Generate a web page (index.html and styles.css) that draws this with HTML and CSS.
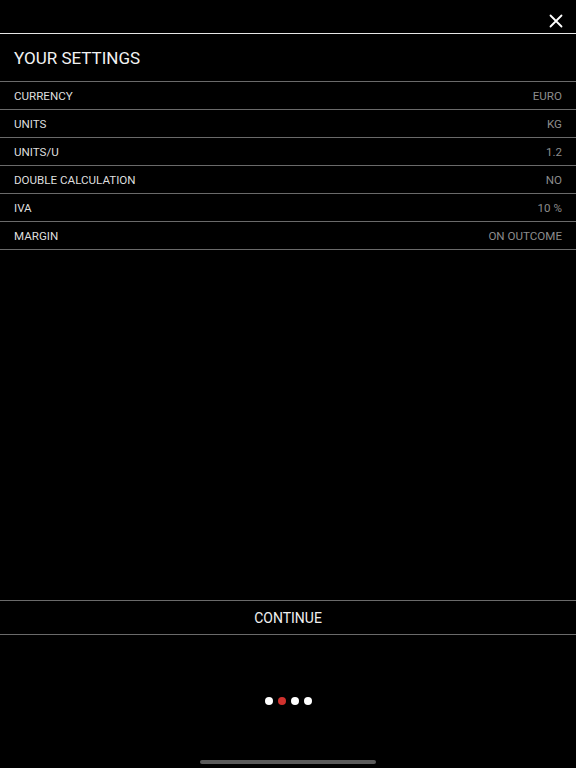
FILE: index.html
```html
<!DOCTYPE html>
<html>
<head>
<meta charset="utf-8">
<link rel="stylesheet" href="styles.css">
</head>
<body>
<div class="screen">
  <div class="topbar">
    <svg class="close" width="14" height="14" viewBox="0 0 14 14"><path d="M1.5 1.5 L12.5 12.5 M12.5 1.5 L1.5 12.5" stroke="#fff" stroke-width="1.8" stroke-linecap="round"/></svg>
  </div>
  <div class="title">YOUR SETTINGS</div>
  <div class="row"><span class="label">CURRENCY</span><span class="value">EURO</span></div>
  <div class="row"><span class="label">UNITS</span><span class="value">KG</span></div>
  <div class="row"><span class="label">UNITS/U</span><span class="value">1.2</span></div>
  <div class="row"><span class="label">DOUBLE CALCULATION</span><span class="value">NO</span></div>
  <div class="row"><span class="label">IVA</span><span class="value">10 %</span></div>
  <div class="row"><span class="label">MARGIN</span><span class="value">ON OUTCOME</span></div>
  <div class="spacer"></div>
  <div class="continue">CONTINUE</div>
  <div class="dots">
    <span class="dot"></span><span class="dot active"></span><span class="dot"></span><span class="dot"></span>
  </div>
  <div class="home"></div>
</div>
</body>
</html>
```
FILE: styles.css
```css
html, body {
  margin: 0;
  padding: 0;
  background: #000;
}
.screen {
  width: 576px;
  height: 768px;
  display: flex;
  flex-direction: column;
  font-family: Roboto, "Liberation Sans", sans-serif;
  color: #e2e2e2;
  overflow: hidden;
}
.topbar {
  height: 33px;
  border-bottom: 1px solid #e6e6e6;
  display: flex;
  justify-content: flex-end;
  align-items: center;
  padding-right: 13px;
  box-sizing: content-box;
}
.close {
  margin-top: 9px;
}
.title {
  height: 47px;
  border-bottom: 1px solid #6a6a6a;
  display: flex;
  align-items: center;
  padding-left: 14px;
  font-size: 17px;
  color: #f2f2f2;
}
.row {
  border-bottom: 1px solid #6a6a6a;
  display: flex;
  justify-content: space-between;
  align-items: center;
  padding: 1px 14px 0;
  box-sizing: border-box;
  height: 28px;
  font-size: 11.6px;
}
.label {
  color: #dedede;
}
.value {
  color: #8c8c8c;
}
.spacer {
  flex: 1;
}
.continue {
  height: 33px;
  border-top: 1px solid #6a6a6a;
  border-bottom: 1px solid #6a6a6a;
  display: flex;
  align-items: center;
  justify-content: center;
  font-size: 14px;
  color: #f0f0f0;
}
.dots {
  margin-top: 62px;
  display: flex;
  justify-content: center;
  gap: 5px;
}
.dot {
  width: 8px;
  height: 8px;
  border-radius: 50%;
  background: #fff;
}
.dot.active {
  background: #d0312d;
}
.home {
  margin: 55px auto 4px;
  width: 176px;
  height: 4px;
  border-radius: 2px;
  background: #5a5a5a;
}
```
